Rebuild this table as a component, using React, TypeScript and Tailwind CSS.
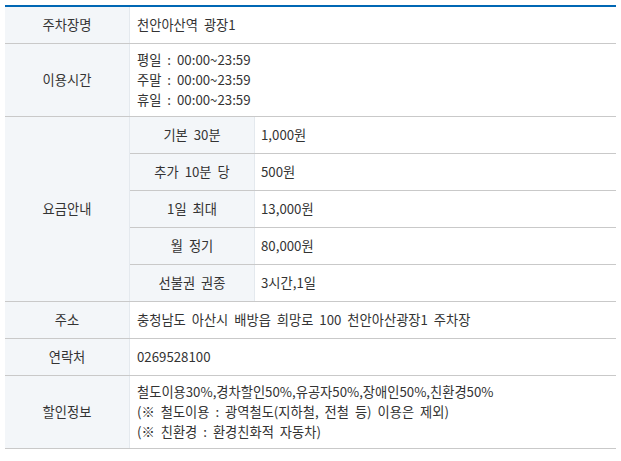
import React from 'react';

const fees = [
  { label: '기본 30분', value: '1,000원' },
  { label: '추가 10분 당', value: '500원' },
  { label: '1일 최대', value: '13,000원' },
  { label: '월 정기', value: '80,000원' },
  { label: '선불권 권종', value: '3시간,1일' },
];

function Head({ children }: { children: React.ReactNode }) {
  return (
    <div className="w-[125px] shrink-0 bg-[#f3f6f9] border-r border-[#e4e9ee] flex items-center justify-center">
      {children}
    </div>
  );
}

export default function App() {
  return (
    <div className="bg-white w-[621px] h-[461px] pt-[5px] px-[5px] text-[13.25px] [word-spacing:3px] text-[#333] font-['Noto_Sans_CJK_KR',sans-serif]">
      <div className="border-t-2 border-[#0067b4]">
        {/* 주차장명 */}
        <div className="flex border-b border-[#c9c9c9] h-[37px]">
          <Head>주차장명</Head>
          <div className="flex-1 flex items-center pl-[7px]">천안아산역 광장1</div>
        </div>

        {/* 이용시간 */}
        <div className="flex border-b border-[#c9c9c9] h-[73px]">
          <Head>이용시간</Head>
          <div className="flex-1 flex flex-col justify-center pl-[7px] leading-[20px]">
            <span>평일 : 00:00~23:59</span>
            <span>주말 : 00:00~23:59</span>
            <span>휴일 : 00:00~23:59</span>
          </div>
        </div>

        {/* 요금안내 */}
        <div className="flex border-b border-[#c9c9c9]">
          <Head>요금안내</Head>
          <div className="flex-1 flex flex-col">
            {fees.map((f, i) => (
              <div
                key={f.label}
                className={i < fees.length - 1 ? 'flex h-[37px] border-b border-[#c9c9c9]' : 'flex h-[36px]'}
              >
                <Head>{f.label}</Head>
                <div className="flex-1 flex items-center pl-[6px]">{f.value}</div>
              </div>
            ))}
          </div>
        </div>

        {/* 주소 */}
        <div className="flex border-b border-[#c9c9c9] h-[37px]">
          <Head>주소</Head>
          <div className="flex-1 flex items-center pl-[7px]">충청남도 아산시 배방읍 희망로 100 천안아산광장1 주차장</div>
        </div>

        {/* 연락처 */}
        <div className="flex border-b border-[#c9c9c9] h-[37px]">
          <Head>연락처</Head>
          <div className="flex-1 flex items-center pl-[7px]">0269528100</div>
        </div>

        {/* 할인정보 */}
        <div className="flex border-b border-[#c9c9c9] h-[73px]">
          <Head>할인정보</Head>
          <div className="flex-1 flex flex-col justify-center pl-[7px] leading-[20px]">
            <span>철도이용30%,경차할인50%,유공자50%,장애인50%,친환경50%</span>
            <span>(※ 철도이용 : 광역철도(지하철, 전철 등) 이용은 제외)</span>
            <span>(※ 친환경 : 환경친화적 자동차)</span>
          </div>
        </div>
      </div>
    </div>
  );
}
